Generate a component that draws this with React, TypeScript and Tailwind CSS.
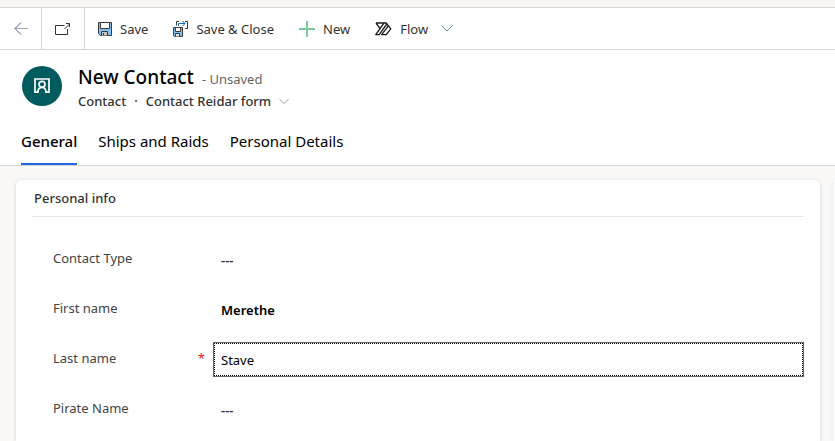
import { ReactNode, useState } from "react";

type ToolbarButtonProps = {
  icon: ReactNode;
  label: string;
};

type FieldProps = {
  id: string;
  label: string;
  value: string;
  required?: boolean;
  onChange: (value: string) => void;
};

const tabs = ["General", "Ships and Raids", "Personal Details"];

const BackIcon = () => (
  <svg width="14" height="13" viewBox="0 0 14 13" fill="none">
    <path d="M1 6.5H14" stroke="#aaa6a4" />
    <path d="M7 0.5L1 6.5L7 12.5" stroke="#4f6288" />
  </svg>
);

const PopOutIcon = () => (
  <svg width="16" height="12" viewBox="0 0 16 12" fill="none" stroke="#333333">
    <path d="M9.5 2.5H0.5V11.5H12.5V6" />
    <path d="M9.5 6L14.5 1M11 0.5H14.5V4" />
  </svg>
);

const SaveIcon = () => (
  <svg width="14" height="14" viewBox="0 0 14 14" fill="none">
    <path d="M0.5 0.5H13.5V13.5H2.5L0.5 11.5Z" fill="#83beec" stroke="#3b3a39" />
    <path d="M2.5 0.5H11.5V6.5H2.5Z" fill="#ffffff" stroke="#3b3a39" />
    <path d="M3.5 13.5V9.5H9.5V13.5" fill="#c8c6c4" stroke="#3b3a39" />
    <path d="M5.5 11V13" stroke="#3b3a39" />
  </svg>
);

const SaveCloseIcon = () => (
  <svg width="15" height="16" viewBox="0 0 15 16" fill="none">
    <path d="M6 0.5H3.5V4.5M12 0.5H14.5V7.5H12" stroke="#3b3a39" />
    <path d="M5.5 5V2.5H12M9.5 0L12 2.5L9.5 5" stroke="#0f6cbd" />
    <path d="M0.5 6.5H9.5V15.5H1.5L0.5 14.5Z" fill="#83beec" stroke="#3b3a39" />
    <path d="M2.5 6.5H7.5V10.5H2.5Z" fill="#ffffff" stroke="#3b3a39" />
    <path d="M2.5 15.5V12.5H6.5V15.5" fill="#e1dfdd" stroke="#3b3a39" />
  </svg>
);

const PlusIcon = () => (
  <svg width="16" height="16" viewBox="0 0 16 16">
    <path d="M8 0V16M0 8H16" stroke="#7ccb9c" strokeWidth="2" />
  </svg>
);

const FlowIcon = () => (
  <svg width="17" height="14" viewBox="0 0 17 14" fill="none" stroke="#1b1a19" strokeWidth="1.3" strokeLinejoin="round">
    <path d="M1 1H11.2L15.8 6.8L11.2 12.6H6.6L13.4 3.8" />
    <path d="M1 1L5 6.6L0.8 12.6H4.2L11.8 2" />
    <path d="M5 6.6L9 1" />
  </svg>
);

const ChevronIcon = ({ className }: { className?: string }) => (
  <svg className={className} width="12" height="7" viewBox="0 0 12 7" fill="none" stroke="currentColor">
    <path d="M0.5 0.5L6 6L11.5 0.5" />
  </svg>
);

const ContactIcon = () => (
  <svg width="16" height="16" viewBox="0 0 16 16" fill="none" stroke="#ffffff" strokeWidth="1.7">
    <path d="M4.5 14.2H1V1H15V14.2H11.5" />
    <circle cx="8" cy="6.3" r="3" />
    <path d="M3.8 15C3.8 11.5 5.6 9.4 8 9.4C10.4 9.4 12.2 11.5 12.2 15" />
  </svg>
);

const ToolbarButton = ({ icon, label }: ToolbarButtonProps) => (
  <button type="button" className="flex items-center gap-2 whitespace-nowrap">
    {icon}
    {label}
  </button>
);

const Field = ({ id, label, value, required, onChange }: FieldProps) => {
  return (
    <div className="flex items-center">
      <label htmlFor={id} className="flex w-40 shrink-0 justify-between pr-2 pb-1 text-[#444444]">
        {label}
        {required && <span className="text-[#e81123]">*</span>}
      </label>
      <input
        id={id}
        type="text"
        value={value}
        placeholder="---"
        required={required}
        onChange={(e) => onChange(e.target.value)}
        className={
          required
            ? "h-[35px] min-w-0 flex-1 border border-[#666666] px-[7px] text-black outline-1 -outline-offset-2 outline-black outline-dotted"
            : "h-[35px] min-w-0 flex-1 border border-transparent px-[7px] font-semibold text-black outline-none placeholder:text-[#333333]"
        }
      />
    </div>
  );
};

const App = () => {
  const [activeTab, setActiveTab] = useState("General");
  const [contact, setContact] = useState({
    contactType: "",
    firstName: "Merethe",
    lastName: "Stave",
    pirateName: "",
  });

  const setField = (name: string) => (value: string) => {
    setContact({ ...contact, [name]: value });
  };

  return (
    <div className="flex min-h-screen flex-col overflow-hidden bg-[#faf9f8] font-['Noto_Sans','Open_Sans',sans-serif] text-[13px] leading-5 text-[#333333]">
      <div className="h-2 border-b border-[#d6d6d6] bg-[#f7f6f5]" />

      <div className="flex h-[42px] items-stretch border-b border-[#d6d6d6] bg-white">
        <button type="button" aria-label="Go back" className="flex w-[42px] items-center justify-center border-r border-[#d6d6d6]">
          <BackIcon />
        </button>
        <button type="button" aria-label="Open in new window" className="flex w-[43px] items-center justify-center border-r border-[#d6d6d6]">
          <PopOutIcon />
        </button>
        <div className="flex items-center gap-[25px] px-[13px]">
          <ToolbarButton icon={<SaveIcon />} label="Save" />
          <ToolbarButton icon={<SaveCloseIcon />} label="Save & Close" />
          <ToolbarButton icon={<PlusIcon />} label="New" />
          <div className="flex items-center gap-[13px]">
            <ToolbarButton icon={<FlowIcon />} label="Flow" />
            <button type="button" aria-label="More flow options" className="text-[#5b86b8]">
              <ChevronIcon />
            </button>
          </div>
        </div>
      </div>

      <header className="border-b border-[#d6d6d6] bg-white">
        <div className="flex items-center gap-4 px-[22px] pt-[13px]">
          <div className="flex size-10 shrink-0 items-center justify-center rounded-full bg-[#005b5e]">
            <ContactIcon />
          </div>
          <div className="flex flex-col gap-[2px]">
            <div className="flex items-baseline gap-2">
              <h1 className="text-[19px] leading-7 font-medium text-black">New Contact</h1>
              <span className="text-[#666666]">- Unsaved</span>
            </div>
            <div className="flex items-center gap-2 leading-4 font-medium">
              <span>Contact</span>
              <span>·</span>
              <button type="button" className="flex items-center gap-2">
                Contact Reidar form
                <ChevronIcon className="w-[10px] text-[#888888]" />
              </button>
            </div>
          </div>
        </div>
        <nav className="mt-[14px] flex gap-[21px] px-[21px] text-[15px] text-black">
          {tabs.map((tab) => (
            <button
              key={tab}
              type="button"
              onClick={() => setActiveTab(tab)}
              className={
                tab === activeTab
                  ? "border-b-2 border-[#2266e3] pt-2 pb-3 font-medium"
                  : "border-b-2 border-transparent pt-2 pb-3"
              }
            >
              {tab}
            </button>
          ))}
        </nav>
      </header>

      <main className="flex flex-1 gap-[14px] pt-[14px] pl-4">
        <section className="min-w-0 flex-1 rounded-t-md bg-white px-4 shadow-[0_1px_4px_rgba(0,0,0,0.16)]">
          <h2 className="border-b border-[#e6e6e6] px-[2px] pt-2 pb-2 font-medium">Personal info</h2>
          <div className="flex flex-col gap-[15px] pt-[25px] pl-[21px]">
            <Field id="contactType" label="Contact Type" value={contact.contactType} onChange={setField("contactType")} />
            <Field id="firstName" label="First name" value={contact.firstName} onChange={setField("firstName")} />
            <Field id="lastName" label="Last name" value={contact.lastName} required onChange={setField("lastName")} />
            <Field id="pirateName" label="Pirate Name" value={contact.pirateName} onChange={setField("pirateName")} />
          </div>
        </section>
        <section className="w-px shrink-0 bg-white shadow-[0_1px_4px_rgba(0,0,0,0.16)]" />
      </main>
    </div>
  );
};

export default App;
